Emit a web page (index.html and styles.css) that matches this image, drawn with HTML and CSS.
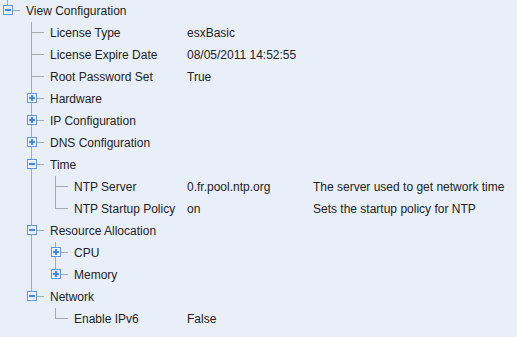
FILE: index.html
```html
<!DOCTYPE html>
<html lang="en">
  <head>
    <meta name="viewport" content="width=device-width, initial-scale=1.0" />
    <title>View Configuration</title>
    <link rel="stylesheet" href="styles.css">
  </head>
  <body>
    <div class="tree">
      <div class="row">
        <div class="name">
          <span class="gut g-end"><span class="tog minus"></span></span>
          <span class="label">View Configuration</span>
        </div>
      </div>

      <div class="row">
        <div class="name">
          <span class="gut"></span><span class="gut g-tee"></span>
          <span class="label">License Type</span>
        </div>
        <div class="value">esxBasic</div>
      </div>
      <div class="row">
        <div class="name">
          <span class="gut"></span><span class="gut g-tee"></span>
          <span class="label">License Expire Date</span>
        </div>
        <div class="value">08/05/2011 14:52:55</div>
      </div>
      <div class="row">
        <div class="name">
          <span class="gut"></span><span class="gut g-tee"></span>
          <span class="label">Root Password Set</span>
        </div>
        <div class="value">True</div>
      </div>
      <div class="row">
        <div class="name">
          <span class="gut"></span><span class="gut g-tee"><span class="tog plus"></span></span>
          <span class="label">Hardware</span>
        </div>
      </div>
      <div class="row">
        <div class="name">
          <span class="gut"></span><span class="gut g-tee"><span class="tog plus"></span></span>
          <span class="label">IP Configuration</span>
        </div>
      </div>
      <div class="row">
        <div class="name">
          <span class="gut"></span><span class="gut g-tee"><span class="tog plus"></span></span>
          <span class="label">DNS Configuration</span>
        </div>
      </div>

      <div class="row">
        <div class="name">
          <span class="gut"></span><span class="gut g-tee"><span class="tog minus"></span></span>
          <span class="label">Time</span>
        </div>
      </div>
      <div class="row">
        <div class="name">
          <span class="gut"></span><span class="gut g-line"></span><span class="gut g-tee"></span>
          <span class="label">NTP Server</span>
        </div>
        <div class="value">0.fr.pool.ntp.org</div>
        <div class="desc">The server used to get network time</div>
      </div>
      <div class="row">
        <div class="name">
          <span class="gut"></span><span class="gut g-line"></span><span class="gut g-end"></span>
          <span class="label">NTP Startup Policy</span>
        </div>
        <div class="value">on</div>
        <div class="desc">Sets the startup policy for NTP</div>
      </div>

      <div class="row">
        <div class="name">
          <span class="gut"></span><span class="gut g-tee"><span class="tog minus"></span></span>
          <span class="label">Resource Allocation</span>
        </div>
      </div>
      <div class="row">
        <div class="name">
          <span class="gut"></span><span class="gut g-line"></span><span class="gut g-tee"><span class="tog plus"></span></span>
          <span class="label">CPU</span>
        </div>
      </div>
      <div class="row">
        <div class="name">
          <span class="gut"></span><span class="gut g-line"></span><span class="gut g-end"><span class="tog plus"></span></span>
          <span class="label">Memory</span>
        </div>
      </div>

      <div class="row">
        <div class="name">
          <span class="gut"></span><span class="gut g-end"><span class="tog minus"></span></span>
          <span class="label">Network</span>
        </div>
      </div>
      <div class="row">
        <div class="name">
          <span class="gut"></span><span class="gut"></span><span class="gut g-end"></span>
          <span class="label">Enable IPv6</span>
        </div>
        <div class="value">False</div>
      </div>
    </div>
  </body>
</html>
```

FILE: styles.css
```css
html,
body {
  margin: 0;
  background: #e9eff8;
}

body {
  font-family: "Liberation Sans", Arial, sans-serif;
  font-size: 12px;
  color: #222;
}

.tree {
  display: flex;
  flex-direction: column;
}

.row {
  display: flex;
  height: 22px;
  line-height: 22px;
}

.name {
  display: flex;
  width: 187px;
  flex: none;
}

.value {
  width: 126px;
  flex: none;
}

.label {
  padding-left: 2px;
  white-space: nowrap;
}

/* tree gutter cells */
.gut {
  position: relative;
  width: 24px;
  height: 22px;
  flex: none;
}

.g-line::before,
.g-tee::before,
.g-end::before {
  content: "";
  position: absolute;
  left: 7px;
  top: 0;
  width: 1px;
  height: 22px;
  background: #aaa;
}

.g-end::before {
  height: 11px;
}

.g-tee::after,
.g-end::after {
  content: "";
  position: absolute;
  left: 7px;
  top: 10px;
  width: 13px;
  height: 1px;
  background: #aaa;
}

/* expand / collapse boxes */
.tog {
  position: absolute;
  left: 3px;
  top: 5px;
  width: 10px;
  height: 10px;
  box-sizing: border-box;
  border: 1px solid #5f92e6;
  box-shadow: inset 0 0 0 1px #fff;
  background: #dfe9fb;
  z-index: 1;
}

.tog::before,
.tog::after {
  content: "";
  position: absolute;
  background: #4a84e2;
}

.tog::before {
  left: 1px;
  top: 3px;
  width: 6px;
  height: 2px;
}

.plus::after {
  left: 3px;
  top: 1px;
  width: 2px;
  height: 6px;
}
```
